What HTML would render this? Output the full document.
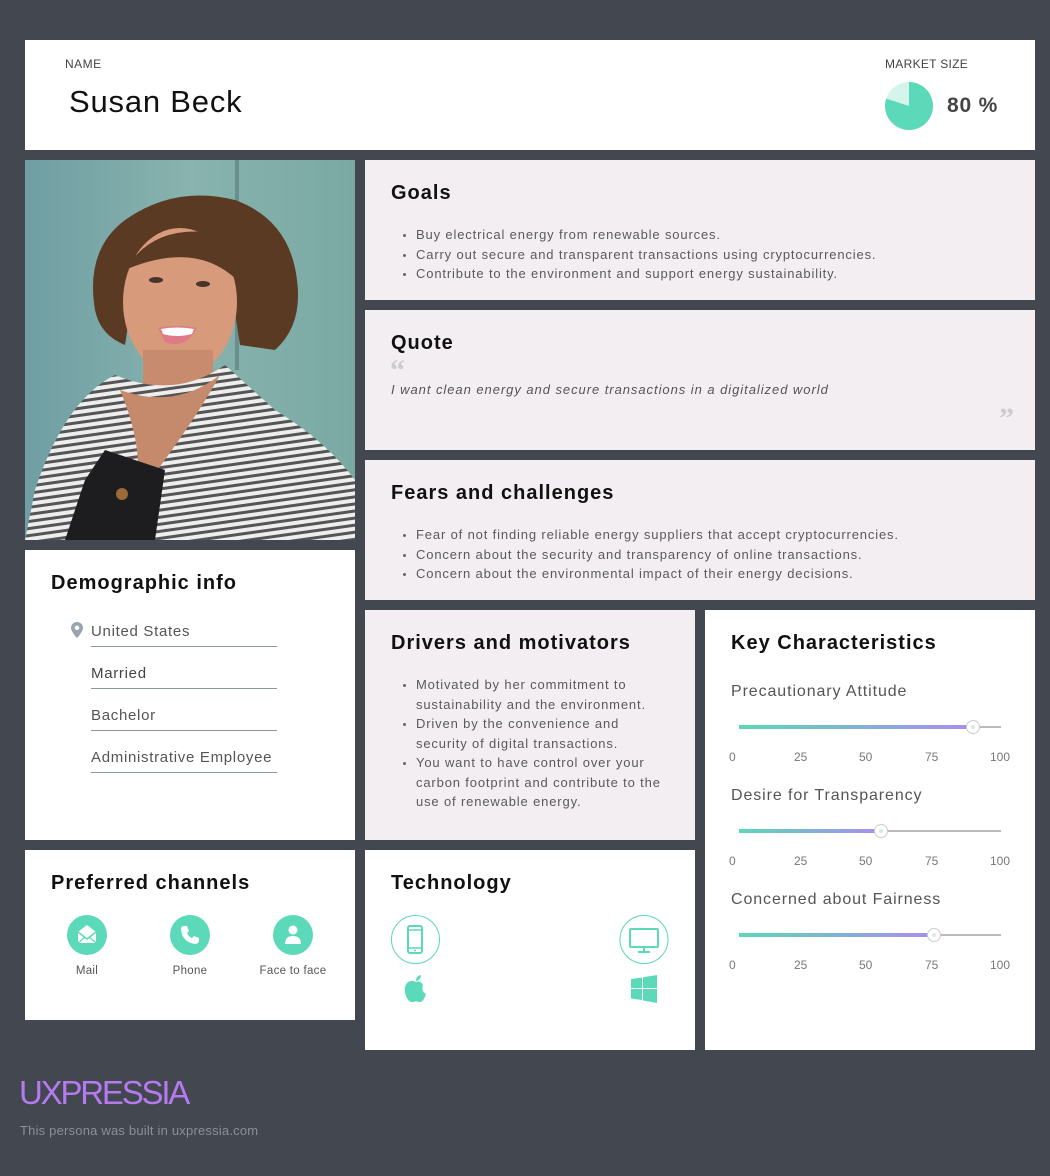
<!DOCTYPE html>
<html><head><meta charset="utf-8"><style>
*{margin:0;padding:0;box-sizing:border-box}
body{width:1050px;height:1176px;background:#434850;font-family:"Liberation Sans",sans-serif;position:relative;overflow:hidden;color:#555}
.c{position:absolute;background:#fff}
.p{background:#f3eef2}
h2{position:absolute;left:26px;top:22px;font-size:20px;font-weight:bold;color:#111;letter-spacing:1px}
ul{position:absolute;left:51px;list-style:none;font-size:13px;line-height:19.5px;color:#5a5a5a;letter-spacing:0.85px}
ul li{position:relative}
ul li:before{content:"";position:absolute;left:-13px;top:9px;width:3px;height:3px;border-radius:50%;background:#666}
.lbl{position:absolute;font-size:16px;color:#555;letter-spacing:0.9px}
.tk{position:absolute;font-size:12px;color:#777}
.trk{position:absolute;left:739px;width:262px;height:2px;background:#bbb}
.fill{position:absolute;left:0;top:-1px;height:4px;background:linear-gradient(90deg,#5ad8b8,#a98cf0)}
.th{position:absolute;top:-6px;width:14px;height:14px;border-radius:50%;background:#fff;border:1px solid #ccc}
.th:after{content:"";position:absolute;left:4px;top:4px;width:4px;height:4px;border-radius:50%;background:#cfeee6}
.dem{position:absolute;left:91px;width:186px;border-bottom:1px solid #8a96a3;font-size:15px;color:#444;padding-bottom:6px;letter-spacing:0.7px}
.ch{position:absolute;top:915px;width:40px;height:40px;border-radius:50%;background:#5bd9b8}
.chl{position:absolute;top:965px;font-size:11.5px;color:#555;text-align:center;width:100px;letter-spacing:0.3px}
</style></head><body>

<div class="c" style="left:25px;top:40px;width:1010px;height:110px">
<div style="position:absolute;left:40px;top:17px;font-size:12px;color:#444;letter-spacing:0.5px">NAME</div>
<div style="position:absolute;left:44px;top:44px;font-size:31px;color:#111;letter-spacing:0.8px">Susan Beck</div>
<div style="position:absolute;left:860px;top:17px;font-size:12px;color:#444;letter-spacing:0.3px">MARKET SIZE</div>
<svg style="position:absolute;left:860px;top:42px" width="48" height="48" viewBox="0 0 48 48"><circle cx="24" cy="24" r="24" fill="#d5f4ec"/><path d="M24 24 L24 0 A24 24 0 1 1 1.2 16.6 Z" fill="#5bd9b8"/></svg>
<div style="position:absolute;left:922px;top:54px;font-size:21px;font-weight:bold;color:#444;letter-spacing:0.8px">80 %</div>
</div>

<svg style="position:absolute;left:25px;top:160px" width="330" height="380" viewBox="0 0 330 380">
<defs><pattern id="st" width="10" height="7" patternUnits="userSpaceOnUse" patternTransform="rotate(-8)"><rect width="10" height="7" fill="#eeeeee"/><rect width="10" height="3" fill="#555"/></pattern>
<linearGradient id="bg" x1="0" x2="1"><stop offset="0" stop-color="#6f9ea3"/><stop offset="0.5" stop-color="#88b3ae"/><stop offset="1" stop-color="#7aa9a4"/></linearGradient></defs>
<rect width="330" height="380" fill="url(#bg)"/>
<rect x="210" y="0" width="4" height="210" fill="#6a8e8c"/>
<path d="M70 150 Q60 90 100 60 Q150 25 210 40 Q265 60 272 120 Q278 165 250 190 L215 185 L205 120 L110 120 L100 185 Q75 175 70 150Z" fill="#5b3a24"/>
<ellipse cx="155" cy="142" rx="57" ry="74" fill="#d79a7a"/>
<path d="M100 110 Q130 60 200 75 Q215 95 212 120 Q170 80 100 110Z" fill="#5b3a24"/>
<ellipse cx="131" cy="120" rx="7" ry="3" fill="#4a3328"/>
<ellipse cx="178" cy="124" rx="7" ry="3" fill="#4a3328"/>
<path d="M133 168 Q152 164 172 168 Q160 190 140 182Z" fill="#e07a86"/>
<path d="M136 169 Q152 166 169 169 L167 174 Q152 178 138 174Z" fill="#fff"/>
<rect x="118" y="190" width="70" height="40" fill="#c98b6d"/>
<path d="M90 215 Q150 240 200 205 L250 250 Q300 280 330 320 L330 380 L0 380 L10 330 Q40 240 90 215Z" fill="url(#st)"/>
<path d="M95 230 Q120 290 110 330 L100 380 L130 380 L125 320 Q170 260 195 215 Q150 250 95 230Z" fill="#c58a6c"/>
<path d="M80 290 L140 310 L130 380 L40 380 L60 320Z" fill="#1d1d1f"/>
<circle cx="97" cy="334" r="6" fill="#9a6a3a"/>
</svg>

<div class="c p" style="left:365px;top:160px;width:670px;height:140px"><h2>Goals</h2>
<ul style="top:65px"><li>Buy electrical energy from renewable sources.</li><li>Carry out secure and transparent transactions using cryptocurrencies.</li><li>Contribute to the environment and support energy sustainability.</li></ul></div>

<div class="c p" style="left:365px;top:310px;width:670px;height:140px"><h2>Quote</h2>
<div style="position:absolute;left:25px;top:44px;font-size:30px;color:#ccc;font-family:'Liberation Serif',serif;font-weight:bold">&ldquo;</div>
<div style="position:absolute;left:26px;top:72px;font-size:13px;font-style:italic;color:#555;letter-spacing:0.95px">I want clean energy and secure transactions in a digitalized world</div>
<div style="position:absolute;left:634px;top:92px;font-size:30px;color:#ccc;font-family:'Liberation Serif',serif;font-weight:bold">&rdquo;</div></div>

<div class="c p" style="left:365px;top:460px;width:670px;height:140px"><h2>Fears and challenges</h2>
<ul style="top:65px"><li>Fear of not finding reliable energy suppliers that accept cryptocurrencies.</li><li>Concern about the security and transparency of online transactions.</li><li>Concern about the environmental impact of their energy decisions.</li></ul></div>

<div class="c" style="left:25px;top:550px;width:330px;height:290px"><h2>Demographic info</h2></div>
<svg style="position:absolute;left:71px;top:622px" width="12" height="16" viewBox="0 0 12 16"><path d="M6 0C2.7 0 0 2.6 0 5.8 0 10 6 16 6 16s6-6 6-10.2C12 2.6 9.3 0 6 0z" fill="#9aa3b0"/><circle cx="6" cy="5.8" r="2.3" fill="#fff"/></svg>
<div class="dem" style="top:623px;color:#555">United States</div>
<div class="dem" style="top:665px">Married</div>
<div class="dem" style="top:707px;color:#555">Bachelor</div>
<div class="dem" style="top:749px;color:#555">Administrative Employee</div>

<div class="c p" style="left:365px;top:610px;width:330px;height:230px"><h2>Drivers and motivators</h2>
<ul style="top:65px"><li>Motivated by her commitment to<br>sustainability and the environment.</li><li>Driven by the convenience and<br>security of digital transactions.</li><li>You want to have control over your<br>carbon footprint and contribute to the<br>use of renewable energy.</li></ul></div>

<div class="c" style="left:705px;top:610px;width:330px;height:440px"><h2>Key Characteristics</h2></div>
<div class="lbl" style="left:731px;top:683px">Precautionary Attitude</div>
<div class="trk" style="top:726px"><div class="fill" style="width:234px"></div><div class="th" style="left:227px"></div></div>
<div class="tk" style="left:729px;top:750px">0</div><div class="tk" style="left:794px;top:750px">25</div><div class="tk" style="left:859px;top:750px">50</div><div class="tk" style="left:925px;top:750px">75</div><div class="tk" style="left:990px;top:750px">100</div>
<div class="lbl" style="left:731px;top:787px">Desire for Transparency</div>
<div class="trk" style="top:830px"><div class="fill" style="width:142px"></div><div class="th" style="left:135px"></div></div>
<div class="tk" style="left:729px;top:854px">0</div><div class="tk" style="left:794px;top:854px">25</div><div class="tk" style="left:859px;top:854px">50</div><div class="tk" style="left:925px;top:854px">75</div><div class="tk" style="left:990px;top:854px">100</div>
<div class="lbl" style="left:731px;top:891px">Concerned about Fairness</div>
<div class="trk" style="top:934px"><div class="fill" style="width:195px"></div><div class="th" style="left:188px"></div></div>
<div class="tk" style="left:729px;top:958px">0</div><div class="tk" style="left:794px;top:958px">25</div><div class="tk" style="left:859px;top:958px">50</div><div class="tk" style="left:925px;top:958px">75</div><div class="tk" style="left:990px;top:958px">100</div>

<div class="c" style="left:25px;top:850px;width:330px;height:170px"><h2>Preferred channels</h2></div>
<div class="ch" style="left:67px"><svg width="40" height="40" viewBox="0 0 40 40"><path d="M11 17 L20 10 L29 17 L29 28 L11 28Z" fill="#fff"/><path d="M11 17 L20 24 L29 17" stroke="#5bd9b8" stroke-width="1.5" fill="none"/><path d="M11 28 L18 22 M29 28 L22 22" stroke="#5bd9b8" stroke-width="1.2"/></svg></div>
<div class="chl" style="left:37px">Mail</div>
<div class="ch" style="left:170px"><svg width="40" height="40" viewBox="0 0 40 40"><path d="M14 11 L17 11 L19 16 L17 18 Q19 22 22 23 L24 21 L29 23 L29 26 Q28 29 25 29 Q12 27 11 14 Q11 11 14 11Z" fill="#fff"/></svg></div>
<div class="chl" style="left:140px">Phone</div>
<div class="ch" style="left:273px"><svg width="40" height="40" viewBox="0 0 40 40"><circle cx="20" cy="15" r="4.5" fill="#fff"/><path d="M12 29 Q12 21 20 21 Q28 21 28 29Z" fill="#fff"/></svg></div>
<div class="chl" style="left:243px">Face to face</div>

<div class="c" style="left:365px;top:850px;width:330px;height:200px"><h2>Technology</h2>
<svg style="position:absolute;left:26px;top:65px" width="50" height="50" viewBox="0 0 50 50"><circle cx="24.5" cy="24.5" r="24" fill="none" stroke="#5bd9b8" stroke-width="1"/><rect x="17" y="11" width="14" height="27" rx="2" fill="none" stroke="#5bd9b8" stroke-width="2"/><line x1="17" y1="15" x2="31" y2="15" stroke="#5bd9b8" stroke-width="1.5"/><line x1="17" y1="33" x2="31" y2="33" stroke="#5bd9b8" stroke-width="1.5"/><circle cx="24" cy="35.5" r="1" fill="#5bd9b8"/></svg>
<svg style="position:absolute;left:38px;top:124px" width="26" height="30" viewBox="0 0 26 30"><path d="M13 8 Q8 5 4 9 Q0 14 3 22 Q6 29 10 28 Q13 27 16 28 Q20 29 23 20 Q18 17 20 11 Q17 6 13 8Z" fill="#5bd9b8"/><path d="M13 7 Q13 2 18 1 Q18 6 13 7Z" fill="#5bd9b8"/></svg>
<svg style="position:absolute;left:254px;top:65px" width="50" height="50" viewBox="0 0 50 50"><circle cx="25" cy="24.5" r="24" fill="none" stroke="#5bd9b8" stroke-width="1"/><rect x="11" y="14" width="28" height="18" rx="1" fill="none" stroke="#5bd9b8" stroke-width="2"/><line x1="25" y1="32" x2="25" y2="36" stroke="#5bd9b8" stroke-width="2"/><line x1="19" y1="37" x2="31" y2="37" stroke="#5bd9b8" stroke-width="2"/></svg>
<svg style="position:absolute;left:266px;top:125px" width="26" height="28" viewBox="0 0 26 28"><path d="M0 4 L11 2.5 L11 13 L0 13Z M12 2.3 L26 0 L26 13 L12 13Z M0 14 L11 14 L11 25 L0 23.5Z M12 14 L26 14 L26 28 L12 25.5Z" fill="#5bd9b8"/></svg>
</div>

<div style="position:absolute;left:19px;top:1074px;font-size:33px;color:#b57af0;letter-spacing:-2.2px;font-family:'Liberation Sans',sans-serif">UXPRESSIA</div>
<div style="position:absolute;left:20px;top:1123px;font-size:13px;color:#8a8f98;letter-spacing:0.2px">This persona was built in uxpressia.com</div>
</body></html>
